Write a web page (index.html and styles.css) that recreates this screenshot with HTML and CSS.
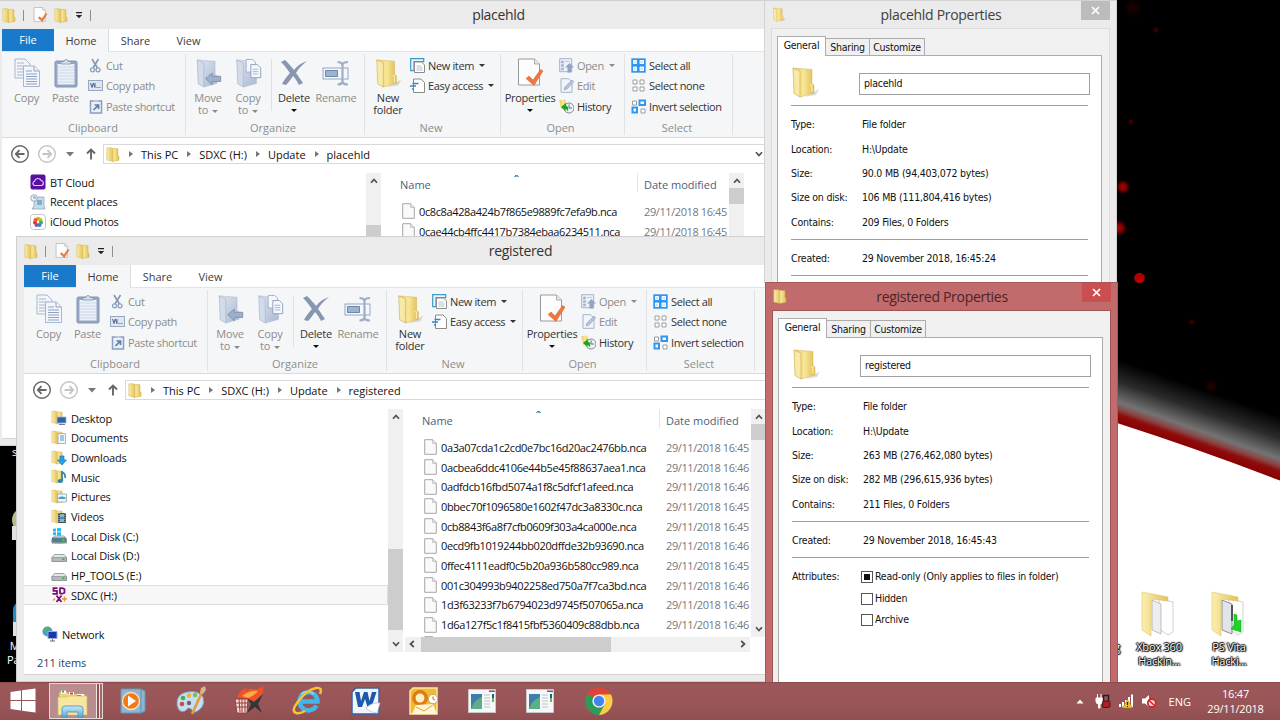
FILE: index.html
```
<!DOCTYPE html>
<html lang="en">
<head>
    <meta charset="UTF-8">
    <meta name="viewport" content="width=device-width, initial-scale=1.0">
    <title>Desktop</title>
    <link rel="stylesheet" href="styles.css">
</head>
<body>
    <!-- Shared icons -->
    <svg class="sprite" width="0" height="0">
        <defs>
            <linearGradient id="gold" x1="0" x2="1"><stop offset="0" stop-color="#fbeeb0"/><stop offset="1" stop-color="#e3c35a"/></linearGradient>
            <linearGradient id="goldDark" x1="0" x2="1"><stop offset="0" stop-color="#e9cd6c"/><stop offset=".5" stop-color="#f8e697"/><stop offset="1" stop-color="#e0bd52"/></linearGradient>
            <linearGradient id="steel" x1="0" x2="1" y2="1"><stop offset="0" stop-color="#dfe6f1"/><stop offset="1" stop-color="#a9b9d2"/></linearGradient>
            <linearGradient id="glass" x2="0" y2="1"><stop offset="0" stop-color="#c9e8f7"/><stop offset="1" stop-color="#58aad8"/></linearGradient>
        </defs>

        <symbol id="folder" viewBox="0 0 14 15">
            <path d="M3 1l9 .8v7l1 .5v4L6 14.500z" fill="url(#goldDark)" stroke="#cfae4c" stroke-width=".5"/>
            <path d="M.8 .8h4l2 1.500v12L.8 13z" fill="url(#gold)" stroke="#d5b759" stroke-width=".5"/>
        </symbol>
        <symbol id="folder-big" viewBox="0 0 28 32">
            <path d="M20 28l8-5-3 6-12 2z" fill="#888" opacity=".3"/>
            <path d="M2 2l19 1.500V18l2 1v8L9 31z" fill="url(#goldDark)" stroke="#d2b04e" stroke-width=".5"/>
            <path d="M2 2l7 3v26l-6-3.500z" fill="#f8e9a6" stroke="#c9a94c" stroke-width=".6"/>
            <path d="M19 19h2v7" fill="none" stroke="#fff3c2"/>
        </symbol>
        <symbol id="folder-blue" viewBox="0 0 28 32">
            <path d="M2 2l19 1.500V18l2 1v8L9 31z" fill="url(#steel)" stroke="#a3b2c9" stroke-width=".5"/>
            <path d="M2 2l7 3v26l-6-3.500z" fill="#d2dbe8" stroke="#9fafc8" stroke-width=".6"/>
        </symbol>
        <symbol id="page-check" viewBox="0 0 26 30">
            <path d="M1 1h16l5 5v21H1z" fill="#fdfdfd" stroke="#9a9a9a"/>
            <path d="M17 1v5h5" fill="#e8e8e8" stroke="#9a9a9a" stroke-width=".8"/>
            <path d="M8.500 20.500l3-2.500 4 4 7.500-10.500 2.500 1.500-9 14.500z" fill="#ee7841" stroke="#d9602b" stroke-width=".5"/>
        </symbol>
        <symbol id="copy" viewBox="0 0 26 30">
            <g fill="#f2f5fa" stroke="#a9b7cd">
                <path d="M1 1h10l5 5v14H1z"/>
                <path d="M3 5h7M3 8h10M3 11h6M3 14h6M3 17h6"/>
                <path d="M9.500 8h11l5 5v15.500h-16z"/>
                <path d="M20 8v5h5M12 13h6M12 16h11M12 18.500h11M12 21h11M12 23.500h11M12 26h11" stroke="#8fa3c1"/>
            </g>
        </symbol>
        <symbol id="paste" viewBox="0 0 24 30">
            <rect x="1" y="3" width="22" height="26" rx="1.500" fill="#94a6c2" stroke="#8195b5"/>
            <path d="M3.500 6h17v20.500h-17z" fill="#eaf0f7"/>
            <path d="M4 9h16M4 12h16M4 15h16M4 18h16M4 21h16M4 24h16" stroke="#c6d2e3" stroke-width=".8"/>
            <path d="M7 6V3.500h3a2 2 0 0 1 4 0h3V6z" fill="#d6deea" stroke="#8294b0" stroke-width=".8"/>
        </symbol>
        <symbol id="cut" viewBox="0 0 15 15">
            <path d="M4 1l5.500 9M10.500 1L5 10" stroke="#8496b2" stroke-width="1.600" fill="none"/>
            <circle cx="4.500" cy="11.800" r="2" fill="none" stroke="#8da0be" stroke-width="1.300"/>
            <circle cx="10" cy="11.800" r="2" fill="none" stroke="#8da0be" stroke-width="1.300"/>
        </symbol>
        <symbol id="copy-path" viewBox="0 0 15 15">
            <rect x=".5" y="2.500" width="14" height="10" fill="#dfe6f1" stroke="#97a8c3"/>
            <path d="M2.500 5l1.500 4.500L5.300 5l1.500 4.500M7 5v4.500" fill="none" stroke="#4f6385"/>
            <path d="M8.500 9.500h4.500" stroke="#4f6385" stroke-dasharray="1 1"/>
        </symbol>
        <symbol id="paste-shortcut" viewBox="0 0 15 15">
            <rect x="2.500" y="2" width="11" height="12" fill="#e9eff7" stroke="#8b9fbf" stroke-width="1.500"/>
            <path d="M5.500 1.300h5v1.500h-5z" fill="#c4cfdf"/>
            <path d="M5.500 11L9.500 7M6.500 6h4v4" fill="none" stroke="#5f7ba8" stroke-width="1.700"/>
        </symbol>
        <symbol id="move-to" viewBox="0 0 28 32">
            <use href="#folder-blue" width="28" height="32"/>
            <path d="M11 22l7-6v3.500h9v5.500h-9v3.500z" fill="#9dafc9" stroke="#7e92b1"/>
        </symbol>
        <symbol id="copy-to" viewBox="0 0 28 32">
            <use href="#folder-blue" width="28" height="32"/>
            <path d="M12 1.500h7l3 3V15H12z" fill="#f4f7fb" stroke="#9fafc8"/>
            <path d="M17 7h7l3.500 3.500V21H17z" fill="#f4f7fb" stroke="#8fa1be"/>
            <path d="M19 12h6M19 14.500h6M19 17h6" stroke="#a6b6cf"/>
        </symbol>
        <symbol id="delete" viewBox="0 0 28 28">
            <path d="M1 3l4-2c4 4 7 7 9 10 3-4 7-7 13-9-5 4-9 8-11 12 3 4 5 7 7 10l-4 2c-2-4-4-7-6-9-2 3-5 7-7 9l-4-1c2-4 5-8 8-11-3-4-5-7-9-11z" fill="#8797b0"/>
        </symbol>
        <symbol id="rename" viewBox="0 0 28 26">
            <rect x="1" y="8" width="25" height="11" fill="#f4f7fb" stroke="#94a6c2"/>
            <path d="M3.500 10.500h12v6h-12z" fill="#9fb2ce" stroke="#6f86aa"/>
            <path d="M15.500 2q4 0 5 2.500Q21.500 2 26 2M20.500 4v18M15.500 24.500q4 0 5-2.500 1 2.500 5.500 2.500" fill="none" stroke="#9eaec7" stroke-width="2.200"/>
        </symbol>
        <symbol id="new-item" viewBox="0 0 15 15">
            <path d="M.7.700h13v3H4v9H.7z" fill="#e9f5fc" stroke="#3c9ac9" stroke-width="1.200"/>
            <path d="M4.500 4h7l3 3v7.500h-10z" fill="#fff" stroke="#8c8c8c"/>
            <path d="M6.500 8h5M6.500 10h6M6.500 12h6" stroke="#9ab4c6" stroke-width=".8"/>
        </symbol>
        <symbol id="easy-access" viewBox="0 0 15 15">
            <path d="M3.500 1h7.500l3.500 3.500v10h-11z" fill="#fdfdfd" stroke="#8b8b8b"/>
            <path d="M2.500 5.500h6M0 8h6M2 11h2" stroke="#3b87bd" stroke-width="1.700"/>
        </symbol>
        <symbol id="open" viewBox="0 0 15 15">
            <path d="M.7.700h12v13H.7z" fill="#edf1f7" stroke="#a4b3ca"/>
            <path d="M2.500 3h2v2h-2zM2.500 6.500h2v2h-2zM2.500 10h2v2h-2zM6 3.500h5" fill="#a4b3ca" stroke="#a4b3ca" stroke-width=".6"/>
            <path d="M10.500 5l4.500 4.500h-2.500v5h-4v-5H6z" fill="#90a5c4"/>
        </symbol>
        <symbol id="edit" viewBox="0 0 15 15">
            <path d="M2 .7h7.500L13 4v10.300H2z" fill="#f1f5fa" stroke="#a4b3ca"/>
            <path d="M5 12l1-3 7-7 1.700 1.800-6.800 7.200z" fill="#b6c5dc" stroke="#8fa3c0" stroke-width=".7"/>
        </symbol>
        <symbol id="history" viewBox="0 0 15 15">
            <path d="M.2 1l6-.5 2 8-6 2z" fill="url(#goldDark)"/>
            <circle cx="10" cy="9" r="5" fill="#edf3f8" stroke="#808a96"/>
            <path d="M10 5.500V9h3" stroke="#5d6c7d" fill="none"/>
            <path d="M2 8l5-4v2.500q3 1 2 6Q8 10 6.500 10v2z" fill="#19a619"/>
        </symbol>
        <symbol id="select-all" viewBox="0 0 15 15">
            <path d="M.3.300h14.400v14.400H.3z" fill="#2f96f3"/>
            <path d="M2.500 2.500h3v3h-3zM9 2.500h3.500v3H9zM2.500 9h3v3.500h-3zM9 9h3.500v3.500H9z" fill="#c7e5ff" stroke="#fff"/>
        </symbol>
        <symbol id="select-none" viewBox="0 0 15 15">
            <path d="M2 2h4v4H2zM9 2h4v4H9zM2 9h4v4H2zM9 9h4v4H9z" fill="#fff" stroke="#9c9c9c"/>
        </symbol>
        <symbol id="invert" viewBox="0 0 15 15">
            <path d="M1.500 2h4v4h-4zM10 10h4v4h-4z" fill="#fff" stroke="#9c9c9c"/>
            <path d="M8.500 1.500H14V6H8.500zM1.500 8.500H6v5H1.500z" fill="#fff" stroke="#2f96f3" stroke-width="2"/>
        </symbol>
        <symbol id="file" viewBox="0 0 13 16">
            <path d="M.7.700h8l3.600 3.600v11H.7z" fill="#fafafa" stroke="#a5a5a5"/>
            <path d="M8.700.700v3.600h3.600" fill="#eee" stroke="#a5a5a5" stroke-width=".7"/>
        </symbol>
        <symbol id="arrow-left" viewBox="0 0 20 20">
            <circle cx="10" cy="10" r="8.300" fill="#fff" stroke="currentColor" stroke-width="1.400"/>
            <path d="M14.500 10H6M9.500 6.200L5.800 10l3.700 3.800" fill="none" stroke="currentColor" stroke-width="1.800"/>
        </symbol>
        <symbol id="chev" viewBox="0 0 8 6">
            <path d="M1 4.800L4 1.500l3 3.300" fill="none" stroke="#505050" stroke-width="1.700"/>
        </symbol>
        <symbol id="drive" viewBox="0 0 16 16">
            <path d="M1 9.500l2.500-3h9.500l2.500 3v4H1z" fill="#e4e6e8" stroke="#8b8f93" stroke-width=".8"/>
            <path d="M1 9.500h14.500v3.700q-7 1-14.500 0z" fill="#b5b9bd" stroke="#7f8387" stroke-width=".6"/>
            <path d="M11 10.500h2.500v1.500H11z" fill="#3cb43c"/>
        </symbol>
        <symbol id="app-window" viewBox="0 0 28 24">
            <path d="M.5.500h27v23H.5z" fill="#f6f7f7" stroke="#c9c9c9"/>
            <path d="M21 1.500h6v1.500h-6z" fill="#60666c"/>
            <path d="M3 5h11v15H3z" fill="#3c7fae"/>
            <path d="M3 20q3-9 11-12v12z" fill="#5cae84"/>
            <path d="M16 6h6M16 9h6M16 12h6M16 15h6M16 18h6" stroke="#c1c3c5"/>
            <path d="M24 5h2v4h-2z" fill="#275b8b"/><path d="M24 9h2v4h-2z" fill="#6ab75f"/>
        </symbol>
    </svg>

    <svg class="wallpaper" viewBox="0 0 1280 720">
        <defs>
            <linearGradient id="horizon" gradientUnits="userSpaceOnUse" x1="1137" y1="366" x2="1117" y2="423">
                <stop offset="0" stop-color="#000"/>
                <stop offset=".35" stop-color="#2b2b2b"/>
                <stop offset=".67" stop-color="#747474"/>
                <stop offset=".78" stop-color="#8a4444"/>
                <stop offset=".86" stop-color="#8e0c0c"/>
                <stop offset="1" stop-color="#8a0000"/>
            </linearGradient>
            <radialGradient id="ember"><stop offset="0" stop-color="#b00000"/><stop offset=".45" stop-color="#7a0000"/><stop offset="1" stop-color="#300000" stop-opacity="0"/></radialGradient>
        </defs>
        <path d="M0 0h1280v720H0z" fill="#000"/>
        <path d="M1100 340l180 40v120h-180z" fill="url(#horizon)"/>
        <path d="M1100 417L1117 423Q1198 449 1280 480.500V720H1100z" fill="#fff"/>
        <circle cx="1123" cy="187" r="8" fill="url(#ember)"/>
        <circle cx="1119" cy="228" r="9" fill="url(#ember)"/>
        <circle cx="1139.500" cy="278" r="5.300" fill="#b00000"/>
        <g fill="url(#ember)" opacity=".4">
            <circle cx="1156" cy="30" r="4"/>
            <circle cx="1131" cy="122" r="4"/>
            <circle cx="1192" cy="322" r="4"/>
            <circle cx="1211" cy="386" r="8" opacity=".5"/>
            <circle cx="1133" cy="8" r="11" opacity=".4"/>
        </g>
    </svg>

    <!-- Desktop shortcuts mostly hidden behind the windows -->
    <div class="shortcut cut-1">s</div>
    <div class="shortcut cut-2"><svg width="18" height="36"><circle cx="12" cy="16" r="12" fill="#b5bd8a"/><path d="M0 22h18v14H0z" fill="#dfe2e6"/></svg><span>I</span></div>
    <div class="shortcut cut-3"><svg width="18" height="36"><rect width="24" height="30" rx="8" fill="#258bc0"/><path d="M0 20h18v14H0z" fill="#dfe2e6"/></svg></div>
    <div class="shortcut cut-4">M<br>Pa</div>
    <div class="shortcut cut-5">g</div>

    <div class="shortcut xbox">
        <svg width="36" height="46" viewBox="0 0 36 46">
            <path d="M18 8l14 3v30l-5 3-9-6z" fill="#fff" stroke="#bbb" stroke-width=".7"/>
            <path d="M11 9l9 4v30l-9-4z" fill="#eceef1" stroke="#999" stroke-width=".6"/>
            <path d="M1 1l26 5v4L10 8v37L1 39z" fill="url(#gold)" stroke="#d8bd62" stroke-width=".5"/>
        </svg>
        <span>Xbox 360<br>Hackin...</span>
    </div>
    <div class="shortcut vita">
        <svg width="36" height="46" viewBox="0 0 36 46">
            <path d="M18 8l14 3v30l-5 3-9-6z" fill="#fff" stroke="#bbb" stroke-width=".7"/>
            <path d="M11 9l10 4v30l-10-4z" fill="#e1e4e8" stroke="#777" stroke-width=".8"/>
            <path d="M21 14v16" stroke="#555" stroke-width="2"/>
            <path d="M1 1l26 5v4L10 8v37L1 39z" fill="url(#gold)" stroke="#d8bd62" stroke-width=".5"/>
            <path d="M23 23l3 1v6l4-1v12l-10-3 3-4z" fill="#1fd32a" stroke="#0ba216" stroke-width=".5"/>
        </svg>
        <span>PS Vita<br>Hacki...</span>
    </div>

    <!-- Ribbon is the same in every Explorer window -->
    <template id="chrome">
        <div class="tabs">
            <span class="tab file-tab">File</span>
            <span class="tab active">Home</span>
            <span class="tab">Share</span>
            <span class="tab">View</span>
        </div>
        <div class="ribbon">
            <div class="group clipboard">
                <div class="tools">
                    <div class="big off"><svg width="26" height="30"><use href="#copy"/></svg>Copy</div>
                    <div class="big off"><svg width="24" height="30"><use href="#paste"/></svg>Paste</div>
                    <div class="small-list off">
                        <div><svg><use href="#cut"/></svg>Cut</div>
                        <div><svg><use href="#copy-path"/></svg>Copy path</div>
                        <div><svg><use href="#paste-shortcut"/></svg>Paste shortcut</div>
                    </div>
                </div>
                <div class="caption">Clipboard</div>
            </div>
            <div class="group organize">
                <div class="tools">
                    <div class="big off"><svg width="27" height="30"><use href="#move-to"/></svg><span>Move</span><span>to <i class="caret"></i></span></div>
                    <div class="big off"><svg width="28" height="30"><use href="#copy-to"/></svg><span>Copy</span><span>to <i class="caret"></i></span></div>
                    <div class="divider"></div>
                    <div class="big"><svg width="28" height="30"><use href="#delete"/></svg>Delete<i class="caret below"></i></div>
                    <div class="big off"><svg width="28" height="30"><use href="#rename"/></svg>Rename</div>
                </div>
                <div class="caption">Organize</div>
            </div>
            <div class="group new">
                <div class="tools">
                    <div class="big"><svg width="28" height="30"><use href="#folder-big"/></svg><span>New</span><span>folder</span></div>
                    <div class="small-list">
                        <div><svg><use href="#new-item"/></svg>New item<i class="caret"></i></div>
                        <div><svg><use href="#easy-access"/></svg>Easy access<i class="caret"></i></div>
                    </div>
                </div>
                <div class="caption">New</div>
            </div>
            <div class="group open">
                <div class="tools">
                    <div class="big"><svg width="27" height="30"><use href="#page-check"/></svg>Properties<i class="caret below"></i></div>
                    <div class="small-list">
                        <div class="off"><svg><use href="#open"/></svg>Open<i class="caret"></i></div>
                        <div class="off"><svg><use href="#edit"/></svg>Edit</div>
                        <div><svg><use href="#history"/></svg>History</div>
                    </div>
                </div>
                <div class="caption">Open</div>
            </div>
            <div class="group select">
                <div class="tools">
                    <div class="small-list">
                        <div><svg><use href="#select-all"/></svg>Select all</div>
                        <div><svg><use href="#select-none"/></svg>Select none</div>
                        <div><svg><use href="#invert"/></svg>Invert selection</div>
                    </div>
                </div>
                <div class="caption">Select</div>
            </div>
        </div>
    </template>

    <template id="quick-access">
        <div class="quick">
            <svg width="14" height="15"><use href="#folder"/></svg>
            <i class="bar"></i>
            <svg width="15" height="16"><use href="#page-check"/></svg>
            <svg width="14" height="15"><use href="#folder"/></svg>
            <svg width="8" height="8" viewBox="0 0 8 8"><path d="M1 1h6v1.200H1zM.8 4h6.400L4 7.200z" fill="#222"/></svg>
            <i class="bar"></i>
        </div>
    </template>

    <template id="nav-buttons">
        <svg class="back" width="20" height="20"><use href="#arrow-left"/></svg>
        <svg class="forward" width="20" height="20"><use href="#arrow-left"/></svg>
        <svg class="recent" width="8" height="5" viewBox="0 0 8 5"><path d="M0 0h8L4 4.500z" fill="#777"/></svg>
        <svg class="up" width="10" height="12" viewBox="0 0 10 12"><path d="M5 11.500V2M1 5.500l4-4 4 4" fill="none" stroke="#666" stroke-width="1.900"/></svg>
    </template>

    <div class="window placehld">
        <div class="title-bar"><div data-template="quick-access"></div><span>placehld</span></div>
        <div class="content">
            <div data-template="chrome"></div>
            <div class="address-row">
                <div class="nav-buttons" data-template="nav-buttons"></div>
                <div class="address">
                    <svg width="14" height="15"><use href="#folder"/></svg><i></i>This PC<i></i>SDXC (H:)<i></i>Update<i></i>placehld
                    <svg class="drop" width="8" height="6"><use href="#chev"/></svg>
                </div>
            </div>
            <div class="panes">
                <div class="tree">
                    <div class="node"><svg viewBox="0 0 16 16"><rect x=".5" y=".5" width="15" height="15" rx="2" fill="#5a0fa0"/><path d="M4.500 11.500a2.200 2.200 0 0 1 0-4.200 3.500 3.500 0 0 1 6.600-.8 2.600 2.600 0 0 1 .6 5z" fill="none" stroke="#e3c9ff" stroke-width="1.200"/></svg>BT Cloud</div>
                    <div class="node"><svg viewBox="0 0 16 16"><path d="M4 3h10v9l1 3H2l2-3z" fill="#c7dbe9" stroke="#8aa0b0" stroke-width=".7"/><path d="M7 6h5v5H7z" fill="#7bb0d2"/><circle cx="4" cy="4" r="3.300" fill="#e8f1f7" stroke="#8b9aa5" stroke-width=".8"/><path d="M4 2v2h2" stroke="#4b7e9f" fill="none" stroke-width=".8"/></svg>Recent places</div>
                    <div class="node"><svg viewBox="0 0 16 16"><rect x=".5" y=".5" width="15" height="15" rx="3" fill="#fff" stroke="#c5c5c5"/><circle cx="8" cy="4.800" r="2" fill="#f9a11b"/><circle cx="10.500" cy="6" r="2" fill="#a6c939"/><circle cx="11" cy="8.500" r="2" fill="#3dae62"/><circle cx="9.500" cy="11" r="2" fill="#2f87c7"/><circle cx="6.500" cy="11" r="2" fill="#8a52a5"/><circle cx="5" cy="8.500" r="2" fill="#e0322d"/><circle cx="5.500" cy="6" r="2" fill="#ef5b25"/></svg>iCloud Photos</div>
                </div>
                <div class="vscroll tree-scroll"><svg><use href="#chev"/></svg><b></b></div>
                <div class="list">
                    <div class="columns"><span>Name</span><span>Date modified</span></div>
                    <div class="row"><svg><use href="#file"/></svg><span>0c8c8a428a424b7f865e9889fc7efa9b.nca</span><time>29/11/2018 16:45</time></div>
                    <div class="row"><svg><use href="#file"/></svg><span>0cae44cb4ffc4417b7384ebaa6234511.nca</span><time>29/11/2018 16:45</time></div>
                </div>
                <div class="vscroll list-scroll"><svg><use href="#chev"/></svg><b></b></div>
            </div>
        </div>
    </div>

    <div class="window registered">
        <div class="title-bar"><div data-template="quick-access"></div><span>registered</span></div>
        <div class="content">
            <div data-template="chrome"></div>
            <div class="address-row">
                <div class="nav-buttons" data-template="nav-buttons"></div>
                <div class="address">
                    <svg width="14" height="15"><use href="#folder"/></svg><i></i>This PC<i></i>SDXC (H:)<i></i>Update<i></i>registered
                </div>
            </div>
            <div class="panes">
                <div class="tree">
                    <div class="node sub"><svg viewBox="0 0 16 16"><use href="#folder" width="13" height="15"/><path d="M6 7h9v6H6z" fill="#2a62ae" stroke="#9fb6d0" stroke-width=".8"/><path d="M8 14.500h6" stroke="#6a7f96"/></svg>Desktop</div>
                    <div class="node sub"><svg viewBox="0 0 16 16"><use href="#folder" width="13" height="15"/><path d="M7 3.500h7.500v10H7z" fill="#f3f7fa" stroke="#94a4b3" stroke-width=".8"/><path d="M9 6h4M9 8h4M9 10h4" stroke="#5e95c7"/></svg>Documents</div>
                    <div class="node sub"><svg viewBox="0 0 16 16"><use href="#folder" width="13" height="15"/><path d="M9 6h4v4h2.500L11 15l-4.500-5H9z" fill="#2ca0e4" stroke="#1b78b4" stroke-width=".7"/></svg>Downloads</div>
                    <div class="node sub"><svg viewBox="0 0 16 16"><use href="#folder" width="13" height="15"/><path d="M11 2v9.500M11 3q4 2 3 6" fill="none" stroke="#2588b4" stroke-width="1.700"/><ellipse cx="9.200" cy="12" rx="2.600" ry="2" fill="#2588b4"/></svg>Music</div>
                    <div class="node sub"><svg viewBox="0 0 16 16"><use href="#folder" width="13" height="15"/><path d="M6.500 5h9v8h-9z" fill="#eef6fb" stroke="#8fa7b8" stroke-width=".8"/><path d="M7.500 8.500q3-2 7 0V10h-7z" fill="#4a9ecb"/></svg>Pictures</div>
                    <div class="node sub"><svg viewBox="0 0 16 16"><use href="#folder" width="13" height="15"/><path d="M7 4h8v10H7z" fill="#41515d"/><path d="M9 5h4v3.500H9zM9 9.500h4V13H9z" fill="#7cb6da"/><path d="M8 4v10M14 4v10" stroke="#eee" stroke-width=".7" stroke-dasharray="1 1"/></svg>Videos</div>
                    <div class="node sub"><svg viewBox="0 0 16 16"><use href="#drive" width="16" height="16" y="1.500"/><path d="M1 9.500h14v4.500q-7 1-14 0z" fill="#527f8d"/><path d="M11 11.500h2.500v1.500H11z" fill="#45d445"/><path d="M2 .8l3-.4v3H2zM6 .3l4-.5v3.600H6zM2 4.300h3v3l-3-.4zM6 4.300h4v3.800l-4-.6z" fill="#25bdf0"/></svg>Local Disk (C:)</div>
                    <div class="node sub"><svg viewBox="0 0 16 16"><use href="#drive" width="16" height="16"/></svg>Local Disk (D:)</div>
                    <div class="node sub"><svg viewBox="0 0 16 16"><use href="#drive" width="16" height="16"/></svg>HP_TOOLS (E:)</div>
                    <div class="node sub selected"><svg viewBox="0 0 16 16"><path d="M6.500 1.200H2.500v2.600h3.500v3H1.500M9 .5v6.500M9 1.200h2.500l2 1v3.500l-2 1H9M5.500 8.500l5 6.500M10.500 8.500l-5 6.500" fill="none" stroke="#7b1074" stroke-width="1.800"/><path d="M2 13.500l2-2M13.500 9.500v5M11 12h5" stroke="#e69440" stroke-width="1.300"/></svg>SDXC (H:)</div>
                    <div class="node network"><svg viewBox="0 0 16 16"><circle cx="5.500" cy="5.500" r="5" fill="#4b9bdc"/><path d="M2 3q4-3 6 0-2 4-5 3zM5 8l3-1-1 3z" fill="#58b451"/><path d="M6 5.500h9v7H6z" fill="#1839b4" stroke="#9ab0cc"/><path d="M10.500 13v2M8 15h5" stroke="#596f89"/></svg>Network</div>
                </div>
                <div class="vscroll tree-scroll"><svg><use href="#chev"/></svg><b></b><svg class="down"><use href="#chev"/></svg></div>
                <div class="list">
                    <div class="columns"><span>Name</span><span>Date modified</span></div>
                    <div class="rows">
                        <div class="row"><svg><use href="#file"/></svg><span>0a3a07cda1c2cd0e7bc16d20ac2476bb.nca</span><time>29/11/2018 16:45</time></div>
                        <div class="row"><svg><use href="#file"/></svg><span>0acbea6ddc4106e44b5e45f88637aea1.nca</span><time>29/11/2018 16:46</time></div>
                        <div class="row"><svg><use href="#file"/></svg><span>0adfdcb16fbd5074a1f8c5dfcf1afeed.nca</span><time>29/11/2018 16:46</time></div>
                        <div class="row"><svg><use href="#file"/></svg><span>0bbec70f1096580e1602f47dc3a8330c.nca</span><time>29/11/2018 16:45</time></div>
                        <div class="row"><svg><use href="#file"/></svg><span>0cb8843f6a8f7cfb0609f303a4ca000e.nca</span><time>29/11/2018 16:45</time></div>
                        <div class="row"><svg><use href="#file"/></svg><span>0ecd9fb1019244bb020dffde32b93690.nca</span><time>29/11/2018 16:46</time></div>
                        <div class="row"><svg><use href="#file"/></svg><span>0ffec4111eadf0c5b20a936b580cc989.nca</span><time>29/11/2018 16:45</time></div>
                        <div class="row"><svg><use href="#file"/></svg><span>001c304993b9402258ed750a7f7ca3bd.nca</span><time>29/11/2018 16:46</time></div>
                        <div class="row"><svg><use href="#file"/></svg><span>1d3f63233f7b6794023d9745f507065a.nca</span><time>29/11/2018 16:46</time></div>
                        <div class="row"><svg><use href="#file"/></svg><span>1d6a127f5c1f8415fbf5360409c88dbb.nca</span><time>29/11/2018 16:46</time></div>
                        <div class="row"><svg><use href="#file"/></svg></div>
                    </div>
                    <div class="hscroll"><svg class="left"><use href="#chev"/></svg><b></b><svg class="right"><use href="#chev"/></svg></div>
                </div>
                <div class="vscroll list-scroll"><svg><use href="#chev"/></svg><b></b><svg class="down"><use href="#chev"/></svg></div>
            </div>
            <div class="status">211 items</div>
        </div>
    </div>

    <div class="dialog first">
        <div class="dialog-title">
            <svg width="14" height="15"><use href="#folder-big"/></svg>
            <span>placehld Properties</span>
            <div class="close"><svg width="9" height="9" viewBox="0 0 9 9"><path d="M1 1l7 7M8 1L1 8" stroke="#fff" stroke-width="1.700"/></svg></div>
        </div>
        <div class="sheet">
            <div class="sheet-tabs"><span class="on">General</span><span>Sharing</span><span>Customize</span></div>
            <div class="page">
                <div class="name-row"><svg width="28" height="32"><use href="#folder-big"/></svg><div class="name-input">placehld</div></div>
                <hr>
                <dl>
                    <dt>Type:</dt><dd>File folder</dd>
                    <dt>Location:</dt><dd>H:\Update</dd>
                    <dt>Size:</dt><dd>90.0 MB (94,403,072 bytes)</dd>
                    <dt>Size on disk:</dt><dd>106 MB (111,804,416 bytes)</dd>
                    <dt>Contains:</dt><dd>209 Files, 0 Folders</dd>
                </dl>
                <hr>
                <dl><dt>Created:</dt><dd>29 November 2018, 16:45:24</dd></dl>
                <hr>
            </div>
        </div>
    </div>

    <div class="dialog second">
        <div class="dialog-title">
            <svg width="14" height="15"><use href="#folder"/></svg>
            <span>registered Properties</span>
            <div class="close"><svg width="9" height="9" viewBox="0 0 9 9"><path d="M1 1l7 7M8 1L1 8" stroke="#fff" stroke-width="1.700"/></svg></div>
        </div>
        <div class="sheet">
            <div class="sheet-tabs"><span class="on">General</span><span>Sharing</span><span>Customize</span></div>
            <div class="page">
                <div class="name-row"><svg width="28" height="32"><use href="#folder-big"/></svg><div class="name-input">registered</div></div>
                <hr>
                <dl>
                    <dt>Type:</dt><dd>File folder</dd>
                    <dt>Location:</dt><dd>H:\Update</dd>
                    <dt>Size:</dt><dd>263 MB (276,462,080 bytes)</dd>
                    <dt>Size on disk:</dt><dd>282 MB (296,615,936 bytes)</dd>
                    <dt>Contains:</dt><dd>211 Files, 0 Folders</dd>
                </dl>
                <hr>
                <dl><dt>Created:</dt><dd>29 November 2018, 16:45:43</dd></dl>
                <hr>
                <div class="attributes">
                    <span>Attributes:</span>
                    <div>
                        <label><i class="box mixed"></i>Read-only (Only applies to files in folder)</label>
                        <label><i class="box"></i>Hidden</label>
                        <label><i class="box"></i>Archive</label>
                    </div>
                </div>
            </div>
        </div>
    </div>

    <div class="taskbar">
        <div class="start"><svg width="26" height="26" viewBox="0 0 26 26"><path d="M.5 4L11 2.500V12H.5zM12 2.300L25.500.500V12H12zM.5 13H11v9.500L.5 21zM12 13h13.500v11.500L12 22.700z" fill="#fff"/></svg></div>
        <div class="running">
            <svg width="32" height="30" viewBox="0 0 32 30">
                <path d="M2 4h8l2 2h16v20H2z" fill="#ecd47c" stroke="#bb9f4a" stroke-width=".6"/>
                <path d="M4 2.500h5v3H4zM12 4h5v3h-5zM20 6h7v3h-7z" fill="#fff"/><path d="M5 2.500h2v2H5z" fill="#3da548"/><path d="M13 4.500h3v2h-3z" fill="#c63d3a"/><path d="M20 7h4v2h-4z" fill="#3a7dc8"/>
                <path d="M1 9h9l2-1h18v19H1z" fill="#f7e69f" stroke="#d3b95f" stroke-width=".6"/>
                <path d="M5 29V21q0-3 3-3h15q3 0 3 3v8h-5v-5H10v5z" fill="url(#glass)" stroke="#4590bd" stroke-width=".8"/>
            </svg>
        </div>
        <div class="app"><svg width="28" height="28" viewBox="0 0 28 28"><path d="M2 2h20l4 2v20l-4 2H2z" fill="#8cb6d4" stroke="#6894b5"/><path d="M22 2v24" stroke="#5f91b4"/><circle cx="12" cy="14" r="8.500" fill="#f07b1b" stroke="#fbe2c4" stroke-width="1.300"/><path d="M9 8.500l8 5.500-8 5.500z" fill="#fff"/></svg></div>
        <div class="app"><svg width="32" height="30" viewBox="0 0 32 30"><path d="M2 19Q1 8 12 6t16 5q2 6-1 10-5 6-9 5-1-4-5-4-3 5-8 3-2-2-3-6z" fill="#c5dff0" stroke="#7b9fba"/><circle cx="7" cy="18" r="2.300" fill="#ce4b44"/><circle cx="8" cy="12" r="2.300" fill="#4bad4d"/><circle cx="14" cy="9.500" r="2.200" fill="#e5b438"/><circle cx="20" cy="9" r="2.200" fill="#7fbc46"/><circle cx="14" cy="17" r="2.200" fill="#7a5a72"/><path d="M28 4L17 28" stroke="#e39b3f" stroke-width="2.600"/><path d="M25 7l1-5 4-2 1 4-3 4z" fill="#d8b58a"/></svg></div>
        <div class="app"><svg width="32" height="30" viewBox="0 0 32 30"><path d="M4 11q3-8 10-9l-2 4q4-5 9-3 5 1 9-3 2 10-8 15z" fill="#f0532a"/><path d="M9 10q8-6 16-5-4 5-10 7z" fill="#ffab49"/><path d="M2 13h13l-1 14H4z" fill="#efdeda" stroke="#a03a34"/><path d="M6 13l1 13M9 13v13M12 13v13M3 17h12M4 21h11" stroke="#a03a34"/><path d="M14 12l7 4 9-8-5 10 4 9-7-6-8 6 4-9z" fill="#373535"/></svg></div>
        <div class="app"><svg width="32" height="30" viewBox="0 0 32 30"><path d="M24.500 19.500A9 9 0 1 1 25.500 15.500H10" fill="none" stroke="#43b7ea" stroke-width="4.500"/><path d="M9 8q6-5 13 0" fill="none" stroke="#9be0fa" stroke-width="1.500"/><path d="M4 27Q-1 25 5 17 14 4 24 2q7-1 4 6M4 27q4 1 9-2" fill="none" stroke="#f6c334" stroke-width="2.500"/></svg></div>
        <div class="app"><svg width="30" height="28" viewBox="0 0 30 28"><path d="M5 1h23v26H1V5z" fill="#eff5fb" stroke="#3961a2" stroke-width="1.500"/><path d="M4 5h4.500l1.500 9 3-9h3.500l2 9L21 5h4.500l-5 15h-4l-2.500-8-3 8H7z" fill="#1d59a8"/><path d="M15 21q6-6 14-5l-3 10q-6-1-9-3z" fill="#fff" stroke="#a7bad7" stroke-width=".7"/></svg></div>
        <div class="app"><svg width="30" height="28" viewBox="0 0 30 28"><path d="M4 1h24v26H1V4z" fill="#f5b92f" stroke="#fbe6a8" stroke-width="1.500"/><circle cx="11" cy="11" r="6.200" fill="#fff0c2" stroke="#dd7c10" stroke-width="3.500"/><path d="M7 18l17-1 4 10H3z" fill="#fff5d9"/><path d="M7 20l8 4 9-6" fill="none" stroke="#e4a32b"/><circle cx="24" cy="12" r="4.700" fill="#fff" stroke="#c9a861"/><path d="M24 9.500V12l2 1" fill="none" stroke="#d05b19"/></svg></div>
        <div class="app"><svg width="28" height="24"><use href="#app-window"/></svg></div>
        <div class="app"><svg width="28" height="24"><use href="#app-window"/></svg></div>
        <div class="app"><svg width="28" height="28" viewBox="0 0 28 28"><path d="M14 14L2 7a14 14 0 0 1 24 0z" fill="#dc4437"/><path d="M14 14L2 7a14 14 0 0 0 12 21l6-11z" fill="#2b9d58"/><path d="M14 14l6 3-6 11A14 14 0 0 0 26 7.500H14z" fill="#fccd44"/><circle cx="14" cy="14" r="6.600" fill="#f2f2f2"/><circle cx="14" cy="14" r="5.200" fill="#4284f3"/></svg></div>

        <div class="tray">
            <svg class="tray-arrow" width="8" height="5" viewBox="0 0 8 5"><path d="M4 .5L7.500 4.500h-7z" fill="#fff"/></svg>
            <svg width="16" height="16" viewBox="0 0 16 16"><path d="M2.500 1v4M6 1v4M1 5h6.500v4q-1 2-2.500 2v4H3.500v-4Q1 11 1 8z" fill="#fff" stroke="#fff"/><path d="M8.500 15V2.500h5V9" fill="none" stroke="#222" stroke-width="1.500"/><rect x="7.500" y="8" width="7.500" height="6.500" rx="1.500" fill="#ab1f26" stroke="#541215"/></svg>
            <svg width="16" height="16" viewBox="0 0 16 16"><path d="M1 11h2v3H1zM4 9h2v5H4zM7 7h2v7H7zM10 4h2v10h-2zM13 1.500h2V14h-2z" fill="#fff"/><path d="M9.500 6.500l5 8.500h-10z" fill="#f5c431" stroke="#a57f0c" stroke-width=".6"/><path d="M9.500 9v3M9.500 13v1" stroke="#222" stroke-width="1.200"/></svg>
            <svg width="16" height="16" viewBox="0 0 16 16"><path d="M1 5.500h3L8 2v12L4 10.500H1z" fill="#fff"/><circle cx="10.800" cy="10" r="4" fill="#f3d3d3" stroke="#d6262b" stroke-width="1.800"/><path d="M8 7.500l5.500 5" stroke="#d6262b" stroke-width="1.600"/></svg>
            <span class="lang">ENG</span>
            <div class="clock">16:47<br>29/11/2018</div>
        </div>
    </div>

    <script src="script.js"></script>
</body>
</html>
```
FILE: styles.css
```
* {
    box-sizing: border-box;
}

body {
    margin: 0;
    width: 1280px;
    height: 720px;
    overflow: hidden;
    position: relative;
    background: #000;
    color: #1a1a1a;
    font-family: "Open Sans", "Noto Sans", sans-serif;
    font-size: 11px;
    letter-spacing: -0.2px;
    white-space: nowrap;
}

svg {
    display: block;
    flex: none;
}

.sprite {
    position: absolute;
}

.wallpaper {
    position: absolute;
    width: 1280px;
    height: 720px;
}

/* Desktop shortcuts */
.shortcut {
    position: absolute;
    display: flex;
    flex-direction: column;
    align-items: center;
    line-height: 14px;
    text-align: center;
    color: #fff;
    text-shadow: 0 0 1px #000, 1px 1px 1px #000, -1px 0 1px #000, 0 -1px 1px #000, 1px 0 2px #000;
}

.xbox {
    left: 1134px;
    top: 591px;
    width: 50px;
    gap: 3px;
}

.vita {
    left: 1204px;
    top: 591px;
    width: 50px;
    gap: 3px;
}

.cut-1 {
    left: 12px;
    top: 445px;
}

.cut-2 {
    left: 12px;
    top: 504px;
    gap: 2px;
}

.cut-3 {
    left: 13px;
    top: 602px;
}

.cut-4 {
    left: 7px;
    top: 639px;
    text-align: right;
}

.cut-5 {
    left: 1114px;
    top: 640px;
}

/* Explorer windows */
.window {
    position: absolute;
    width: 1009px;
    height: 446px;
    padding: 0 7px 6px;
    border: 1px solid #cfcfcf;
    background: #ebebeb;
    display: flex;
    flex-direction: column;
}

.placehld {
    left: -6px;
    top: 0;
}

.registered {
    left: 16px;
    top: 236px;
}

.title-bar {
    height: 28px;
    display: grid;
    grid-template-columns: 1fr auto 1fr;
    align-items: center;
    font-size: 14px;
    letter-spacing: -0.3px;
    color: #333;
    padding-bottom: 2px;
}

.quick {
    display: flex;
    align-items: center;
    padding-top: 2px;
}

.quick .bar {
    width: 1px;
    height: 11px;
    margin: 0 9px 0 7px;
    background: #8e8e8e;
}

.quick svg + svg {
    margin-left: 6px;
}

.quick svg + svg + svg {
    margin-left: 7px;
}

.content {
    flex: 1;
    display: flex;
    flex-direction: column;
    background: #fff;
    border-bottom: 1px solid #d4d4d4;
    min-height: 0;
}

.tabs {
    display: flex;
    height: 22px;
    letter-spacing: 0;
    line-height: 24px;
    color: #3b3b3b;
}

.tab {
    width: 53px;
    text-align: center;
}

.file-tab {
    width: 52px;
    background: #1979ca;
    color: #fff;
    line-height: 22px;
}

.tab.active {
    width: 55px;
    height: 23px;
    background: #f5f6f7;
    border: 1px solid #dadbdc;
    border-width: 0 1px 0 0;
    position: relative;
}

.ribbon {
    height: 87px;
    display: flex;
    background: #f5f6f7;
    border-top: 1px solid #e3e4e5;
    border-bottom: 1px solid #d8d9da;
    padding: 2px 0;
    color: #333;
}

.group {
    border-right: 1px solid #e1e2e3;
    display: flex;
    flex-direction: column;
    justify-content: space-between;
}

.clipboard {
    width: 184px;
    padding-left: 5px;
}

.organize {
    width: 179px;
    padding-left: 2px;
}

.new {
    width: 136px;
    padding-left: 3px;
}

.open {
    width: 124px;
    padding-left: 2px;
}

.select {
    width: 108px;
    padding-left: 3px;
}

.tools {
    display: flex;
}

.caption {
    color: #8d8d8d;
    text-align: center;
    line-height: 14px;
    padding-right: 6px;
    letter-spacing: 0;
}

.big {
    width: 39px;
    padding-top: 4px;
    display: flex;
    flex-direction: column;
    align-items: center;
    text-align: center;
    line-height: 12px;
}

.big svg {
    margin-bottom: 4px;
}

.organize .big {
    width: 40px;
}

.organize .big:last-child {
    width: 44px;
}

.new .big {
    width: 40px;
}

.open .big {
    width: 54px;
    letter-spacing: -0.25px;
}

.off {
    color: #8b8b8b;
}

.divider {
    width: 1px;
    height: 52px;
    margin: 5px 2px 0 3px;
    background: #dfe0e1;
}

.caret {
    display: inline-block;
    border: 3px solid transparent;
    border-top-color: currentColor;
    border-bottom: 0;
    margin-left: 5px;
    vertical-align: middle;
}

.big .caret {
    margin-left: 1px;
}

.big .caret.below {
    margin: 5px 0 0;
    border-top-color: #111;
}

.small-list {
    padding: 1px 0 0 3px;
    letter-spacing: -0.36px;
}

.small-list.off {
    color: #8b8b8b;
}

.small-list div {
    height: 20.500px;
    display: flex;
    align-items: center;
}

.small-list svg {
    width: 15px;
    height: 15px;
    margin-right: 3px;
}

.new .small-list,
.open .small-list {
    padding-left: 2px;
}

/* Address row */
.address-row {
    height: 34.500px;
    display: flex;
    align-items: center;
    padding-bottom: 2px;
}

.nav-buttons {
    width: 101px;
    display: flex;
    align-items: center;
    padding-left: 8px;
}

.back {
    color: #666;
}

.forward {
    color: #c4c4c4;
    margin-left: 7px;
    transform: scaleX(-1);
}

.recent {
    margin-left: 9px;
}

.up {
    margin-left: 12px;
}

.address {
    width: 664px;
    height: 20px;
    border: 1px solid #d9d9d9;
    display: flex;
    align-items: center;
    padding-left: 2px;
    color: #111;
    letter-spacing: 0;
}

.placehld .address {
    width: 662px;
}

.address i {
    border: 3.500px solid transparent;
    border-left: 4px solid #757575;
    border-right: 0;
    margin: 0 8px 0 9px;
}

.drop {
    margin-left: auto;
    margin-right: 1px;
    transform: scaleY(-1);
}

/* Panes */
.panes {
    flex: none;
    height: 243px;
    display: flex;
    overflow: hidden;
}

.placehld .panes {
    flex: 1;
}

.tree {
    width: 364px;
    color: #111;
}

.node {
    height: 19.650px;
    display: flex;
    align-items: center;
    gap: 4px;
    padding-left: 28px;
    border: 1px solid transparent;
    border-left: 0;
}

.node svg {
    width: 16px;
    height: 16px;
}

.node.sub {
    padding-left: 27px;
}

.node.selected {
    background: #f7f7f7;
    border-color: #dedede;
}

.node.network {
    margin-top: 19.650px;
    padding-left: 18px;
}

.vscroll {
    width: 15px;
    background: #f0f0f0;
    display: flex;
    flex-direction: column;
    align-items: center;
}

.vscroll svg {
    width: 8px;
    height: 6px;
    margin-top: 5px;
}

.vscroll b {
    width: 15px;
    height: 16px;
    margin-top: 4px;
    background: #cdcdcd;
}

.vscroll .down {
    margin: auto 0 5px;
    transform: scaleY(-1);
}

.placehld .tree-scroll b {
    margin-top: 41px;
}

.registered .tree-scroll b {
    height: 81px;
    margin-top: 129px;
}

.registered .list-scroll {
    height: 228px;
}

.list {
    width: 348px;
    display: flex;
    flex-direction: column;
}

.columns {
    flex: none;
    height: 29px;
    display: flex;
    line-height: 24px;
    padding-left: 19px;
    color: #4c607a;
    letter-spacing: 0;
    background: linear-gradient(#5a8fae, #5a8fae) 134px 2px / 3px 1px no-repeat, linear-gradient(#7fa7be, #7fa7be) 133px 3px / 5px 1px no-repeat;
}

.columns span:first-child {
    width: 238px;
    height: 19px;
    border-right: 1px solid #e5e5e5;
    margin-right: 6px;
}

.rows {
    height: 199px;
    overflow: hidden;
}

.row {
    height: 19.700px;
    display: flex;
    align-items: center;
    padding-left: 21px;
    color: #111;
}

.row svg {
    width: 13px;
    height: 16px;
}

.row span {
    width: 226px;
    padding-left: 4px;
    letter-spacing: -0.38px;
}

.row time {
    color: #777;
    letter-spacing: -0.4px;
    padding-left: 3px;
}

.hscroll {
    flex: none;
    height: 15px;
    width: 345px;
    margin-left: 2px;
    background: #f0f0f0;
    display: flex;
    align-items: center;
}

.hscroll svg {
    width: 8px;
    height: 6px;
}

.hscroll b {
    width: 190px;
    height: 15px;
    background: #cdcdcd;
    margin-left: 5px;
}

.hscroll .left {
    margin-left: 3px;
    transform: rotate(-90deg);
}

.hscroll .right {
    margin: 0 3px 0 auto;
    transform: rotate(90deg);
}

.status {
    line-height: 22px;
    padding-left: 13px;
    color: #2b3f5f;
    letter-spacing: -0.1px;
}

/* Property dialogs */
.dialog {
    position: absolute;
    width: 353px;
    padding: 0 6px;
    overflow: hidden;
    display: flex;
    flex-direction: column;
    font-family: "DejaVu Sans Condensed", "DejaVu Sans", sans-serif;
    font-stretch: condensed;
    font-size: 10.500px;
    letter-spacing: -0.22px;
    color: #111;
}

.dialog.first {
    left: 764px;
    top: 0;
    height: 283px;
    background: #ebebeb;
    border: 1px solid #d3d3d3;
    border-bottom: 0;
}

.dialog.second {
    left: 765px;
    top: 282px;
    height: 400px;
    background: #c16b6d;
    border: 1px solid #a8585b;
    border-bottom: 0;
}

.dialog-title {
    height: 27px;
    display: grid;
    grid-template-columns: 1fr auto 1fr;
    align-items: center;
    flex: none;
    font-family: "Open Sans", "Noto Sans", sans-serif;
    font-stretch: normal;
    font-size: 14px;
    letter-spacing: -0.3px;
    color: #404040;
    padding-left: 1px;
}

.dialog-title > span {
    padding-bottom: 1px;
}

.second .dialog-title {
    color: #4a2526;
}

.close {
    width: 29px;
    height: 19px;
    align-self: start;
    justify-self: end;
    display: flex;
    align-items: center;
    justify-content: center;
    background: #bcbcbc;
}

.second .close {
    background: #c94f50;
}

.sheet {
    flex: 1;
    min-height: 0;
    background: #f0f0f0;
    border: 1px solid #dcdcdc;
    border-bottom: 0;
    padding: 7px 7px 0 5px;
    display: flex;
    flex-direction: column;
}

.second .sheet {
    border-color: #9f5558;
}

.sheet-tabs {
    display: flex;
    align-items: flex-end;
    height: 19px;
    flex: none;
}

.sheet-tabs span {
    height: 17px;
    line-height: 17px;
    width: 55px;
    text-align: center;
    border: 1px solid #acacac;
    border-left: 0;
    border-bottom: 0;
}

.sheet-tabs span:nth-child(2) {
    width: 44px;
}

.sheet-tabs .on {
    width: 49px;
    height: 20px;
    margin-bottom: -1px;
    background: #fff;
    border-left: 1px solid #acacac;
    position: relative;
}

.page {
    flex: 1;
    background: #fff;
    border: 1px solid #acacac;
    border-bottom: 0;
    padding: 10px 13px 0;
}

.name-row {
    display: flex;
    height: 39px;
}

.name-input {
    width: 231px;
    height: 22px;
    margin: 7px -2px 0 40px;
    border: 1px solid #a0a0a0;
    line-height: 19px;
    padding-left: 4px;
}

.page hr {
    height: 1px;
    margin: 0;
    border: 0;
    background: #9d9d9d;
}

dl {
    display: grid;
    grid-template-columns: 71px 1fr;
    grid-auto-rows: 24.350px;
    align-items: center;
    margin: 0;
    padding: 6px 0 5px;
}

dd {
    margin: 0;
}

.attributes {
    display: grid;
    grid-template-columns: 69px 1fr;
    padding-top: 8px;
    line-height: 21.700px;
}

.attributes label {
    display: flex;
    align-items: center;
    gap: 2px;
    height: 21.700px;
}

.box {
    width: 12px;
    height: 12px;
    border: 1px solid #555;
    background: #fff;
}

.box.mixed {
    background: linear-gradient(#111, #111) center / 6px 6px no-repeat;
}

/* Taskbar */
.taskbar {
    position: absolute;
    left: 0;
    top: 682px;
    width: 1280px;
    height: 38px;
    display: flex;
    align-items: center;
    background: linear-gradient(#8a494c, #9c575a 2px, #985456 70%, #904e51);
    color: #fff;
}

.start {
    width: 49px;
    padding-left: 10px;
}

.running {
    width: 54px;
    height: 36px;
    margin-right: 1px;
    padding: 4px 0 0 7px;
    border: 1px solid #e9d6d7;
    background: linear-gradient(90deg, transparent 46px, #f2e3e3 46px, #f2e3e3 47px, #8f5356 47px, #8f5356 49px, #f2e3e3 49px, #f2e3e3 50px, #a06a6c 50px), #b98d8f;
}

.app {
    width: 58.200px;
    display: flex;
    justify-content: center;
}

.tray {
    margin-left: auto;
    display: flex;
    align-items: center;
    gap: 7px;
}

.tray-arrow {
    margin-right: 4px;
}

.lang {
    margin: 0 9px 0 5px;
    letter-spacing: 0;
}

.clock {
    width: 57px;
    margin-right: 16px;
    line-height: 15.500px;
    text-align: center;
}
```
FILE: script.js
```
document.querySelectorAll('[data-template]').forEach(function (slot) {
    var source = document.getElementById(slot.dataset.template);
    slot.appendChild(source.content.cloneNode(true));
});
```
